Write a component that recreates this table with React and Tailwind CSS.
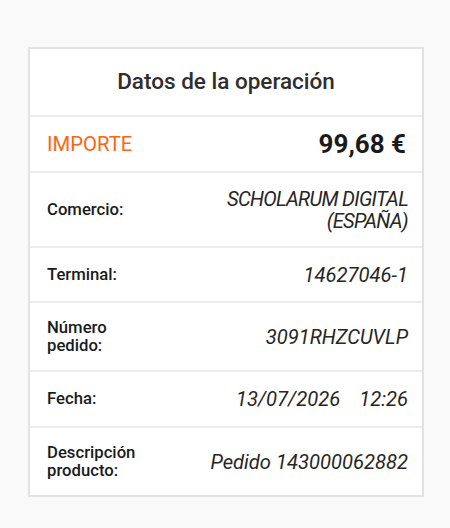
export default function App() {
  const rows = [
    { label: ["Comercio:"], value: ["SCHOLARUM DIGITAL", "(ESPAÑA)"], h: "h-[75px]", tight: true },
    { label: ["Terminal:"], value: ["14627046-1"], h: "h-[55px]" },
    { label: ["Número", "pedido:"], value: ["3091RHZCUVLP"], h: "h-[69px]" },
    { label: ["Fecha:"], value: null, h: "h-[56px]" },
    { label: ["Descripción", "producto:"], value: ["Pedido 143000062882"], h: "h-[67px]" },
  ];
  return (
    <div className="w-[450px] h-[528px] bg-[#f9f9f9] pt-[47px] pl-[28px]" style={{ fontFamily: "Roboto, 'Noto Sans', sans-serif" }}>
      <div className="w-[396px] bg-white border-2 border-[#e2e2e2] flex flex-col">
        <div className="h-[68px] flex items-center justify-center border-b-2 border-[#ececec]">
          <span className="text-[22.5px] font-medium text-[#2e2e2e]">Datos de la operación</span>
        </div>
        <div className="h-[56px] flex items-center justify-between pl-[17px] pr-[16px] border-b-2 border-[#ececec]">
          <span className="text-[20.3px] text-[#ff6410]">IMPORTE</span>
          <span className="text-[26px] font-bold text-[#1a1a1a]">99,68 €</span>
        </div>
        {rows.map((r, i) => (
          <div key={i} className={`${r.h} flex items-center justify-between pl-[17px] pr-[14px] ${i < rows.length - 1 ? "border-b-2 border-[#ececec]" : ""}`}>
            <div className="text-[16.7px] font-medium text-[#1a1a1a] leading-[18px]">
              {r.label.map((l, j) => (<div key={j}>{l}</div>))}
            </div>
            {r.value ? (
              <div className={`text-[20.2px] italic text-[#262626] leading-[22px] text-right ${r.tight ? "tracking-[-0.7px]" : ""}`}>
                {r.value.map((v, j) => (<div key={j}>{v}</div>))}
              </div>
            ) : (
              <div className="flex gap-[19px] text-[20.2px] italic text-[#262626] leading-[22px]">
                <span>13/07/2026</span>
                <span>12:26</span>
              </div>
            )}
          </div>
        ))}
      </div>
    </div>
  );
}
